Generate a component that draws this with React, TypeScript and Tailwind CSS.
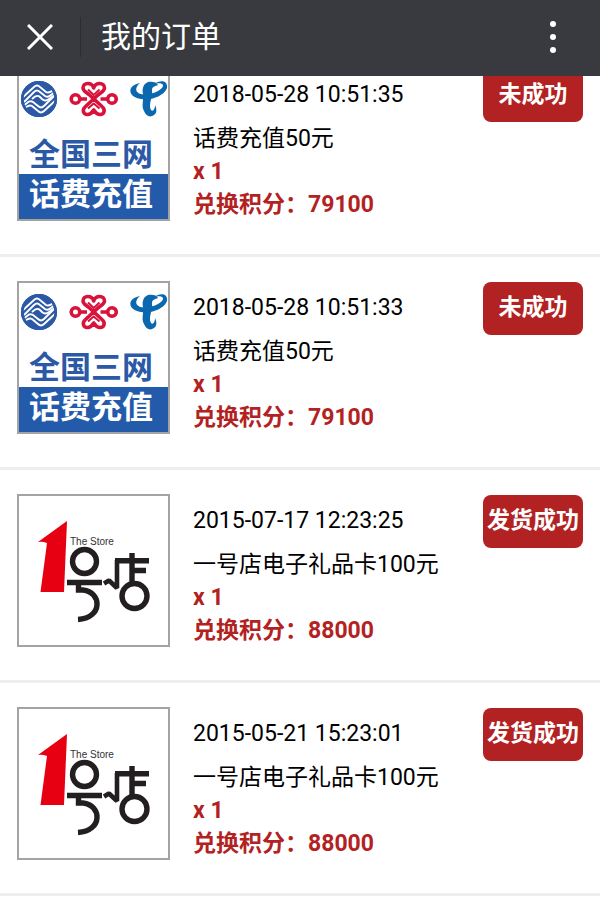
type Order = {
  id: number;
  time: string;
  name: string;
  count: number;
  points: number;
  status: string;
  kind: "recharge" | "store";
};

const orders: Order[] = [
  { id: 1, time: "2018-05-28 10:51:35", name: "话费充值50元", count: 1, points: 79100, status: "未成功", kind: "recharge" },
  { id: 2, time: "2018-05-28 10:51:33", name: "话费充值50元", count: 1, points: 79100, status: "未成功", kind: "recharge" },
  { id: 3, time: "2015-07-17 12:23:25", name: "一号店电子礼品卡100元", count: 1, points: 88000, status: "发货成功", kind: "store" },
  { id: 4, time: "2015-05-21 15:23:01", name: "一号店电子礼品卡100元", count: 1, points: 88000, status: "发货成功", kind: "store" },
];

function RechargeArt() {
  return (
    <svg viewBox="2 2 149 149" className="block w-full" role="img" aria-label="全国三网话费充值">
      <rect x="2" y="2" width="149" height="149" fill="#fff" />
      {/* China Mobile */}
      <circle cx="22" cy="31" r="18" fill="#2b59a6" />
      <g fill="none" stroke="#fff" strokeWidth="1.9" strokeLinejoin="round">
        <path d="M5 30 L17 19 Q20 16 23 19 L29 24 Q32 26 37 21" />
        <path d="M7 34 L17 24 Q20 21 23 24 L28 28 Q31 30 34 27 L39 23" />
        <path d="M15 31 Q20 26 23 29 L25 31 Q28 34 32 31 L39 26" />
        <path d="M39 32 L27 43 Q24 46 21 43 L15 38 Q12 36 7 41" />
        <path d="M37 28 L27 38 Q24 41 21 38 L16 34 Q13 32 10 35 L5 39" />
      </g>
      <circle cx="22" cy="31" r="16.7" fill="none" stroke="#2b59a6" strokeWidth="2.8" />
      {/* China Unicom */}
      <g fill="none" stroke="#d8123a" strokeWidth="3.6" strokeLinejoin="round">
        <circle cx="58.5" cy="31" r="4.300" />
        <circle cx="95" cy="31" r="4.300" />
        <path d="M63 31 H70 M83.500 31 H91" />
        <path d="M76.700 20 C75 14 66 14 66 20 C66 23 69 24 72 26.500 L85 38.500 C89 42 87 47 82.500 46.500 C79.500 46 78 44 76.700 42 C75.500 44 74 46 71 46.500 C66.500 47 64.500 42 68.500 38.500 L81.500 26.500 C84.500 24 87.500 23 87.500 20 C87.500 14 78.500 14 76.700 20 Z" />
        <path d="M71 21.500 L76.700 27 L82.500 21.500 M71 40.500 L76.700 35.500 L82.500 40.500" strokeWidth="2" />
      </g>
      {/* China Telecom */}
      <g fill="#0b68ae">
        <path d="M149 15 C154 23 141 31 129 31.500 C118 31.500 111 26 114 20 C116 17 119 16 123 15 C117 20 118 26 127 26.500 C137 26.500 147 21 146 17 C145 15 141 15 137 16 C141 13 147 12 149 15 Z" />
        <path d="M141 17 C140 14 135 13 131 14 C126 16 125 21 126 26 C127 32 124 38 127 43 C129 48 133 50 137 47 C140 45 140 41 138 37 C138 41 136 44 134 42 C131 37 136 28 135 22 C135 19 138 18 141 17 Z" />
      </g>
      <text x="12" y="97" fontSize="31" fontWeight="700" fill="#2b59a6" className="font-['Liberation_Sans','Noto_Sans_CJK_SC',sans-serif]">
        全国三网
      </text>
      <rect x="2" y="106" width="149" height="45" fill="#245aaa" />
      <text x="12" y="137" fontSize="31" fontWeight="700" fill="#fff" className="font-['Liberation_Sans','Noto_Sans_CJK_SC',sans-serif]">
        话费充值
      </text>
    </svg>
  );
}

function StoreArt() {
  return (
    <svg viewBox="2 2 149 149" className="block w-full" role="img" aria-label="1号店 The Store">
      <rect x="2" y="2" width="149" height="149" fill="#fff" />
      <path d="M50 27 L47 98 H23.500 L30 49 Q25 47 21 48 Z" fill="#e60012" />
      <text x="53" y="51" fontSize="10" fill="#333" className="font-['Liberation_Sans',Arial,sans-serif]">
        The Store
      </text>
      <g fill="none" stroke="#231f20" strokeWidth="5.4">
        <circle cx="67.5" cy="67.5" r="12" />
        <path d="M50 88.500 H85 M61.500 90 V96 H66 C85 98 86 124 61 125.500" />
        <path d="M98 66.700 H132 M115 59 V91 M115 76.500 H129" />
        <path d="M100 66 V94 L92 86.500 L87 89.500" strokeWidth="4.600" strokeLinejoin="bevel" />
        <circle cx="117.5" cy="102" r="12.500" />
      </g>
    </svg>
  );
}

function OrderItem({ order }: { order: Order }) {
  return (
    <li className="flex items-start border-b-3 border-[#eeeeee] px-[17px] pt-6 pb-[33px]">
      <div className="w-[153px] shrink-0 border-2 border-[#a3a3a3]">
        {order.kind === "recharge" ? <RechargeArt /> : <StoreArt />}
      </div>
      <div className="ml-[23px] min-w-0 flex-1 pt-[10px] text-[23px] leading-[33px] text-black">
        <p className="mb-[11px]">{order.time}</p>
        <p className="whitespace-nowrap">{order.name}</p>
        <div className="font-bold text-[#b22222]">
          <p>x {order.count}</p>
          <p>兑换积分：{order.points}</p>
        </div>
      </div>
      <button
        type="button"
        className="mt-px h-[53px] w-[100px] shrink-0 rounded-lg bg-[#b22222] pb-[2px] text-center text-[23px] leading-[33px] font-bold whitespace-nowrap text-white"
      >
        {order.status}
      </button>
    </li>
  );
}

export default function App() {
  return (
    <div className="min-h-screen bg-white font-[Roboto,'Noto_Sans_CJK_SC',sans-serif]">
      <header className="sticky top-0 z-10 flex h-[76px] items-center bg-[#393a3f] pb-[3px] text-white">
        <button type="button" aria-label="关闭" className="flex h-full w-20 items-center justify-center">
          <svg viewBox="0 0 26 26" className="size-[26px]" fill="none" stroke="currentColor" strokeWidth="3">
            <path d="M1 1 L25 25 M25 1 L1 25" />
          </svg>
        </button>
        <div className="h-10 w-px bg-[#2c2d31]" />
        <h1 className="ml-5 flex-1 text-[30px] leading-10">我的订单</h1>
        <button type="button" aria-label="更多" className="mr-8 flex h-full w-[30px] items-center justify-center">
          <svg viewBox="0 0 6 32" className="h-8 w-[6px]" fill="currentColor">
            <circle cx="3" cy="3" r="3" />
            <circle cx="3" cy="16" r="3" />
            <circle cx="3" cy="29" r="3" />
          </svg>
        </button>
      </header>
      <main className="-mt-8">
        <ul>
          {orders.map((order) => (
            <OrderItem key={order.id} order={order} />
          ))}
        </ul>
      </main>
    </div>
  );
}
